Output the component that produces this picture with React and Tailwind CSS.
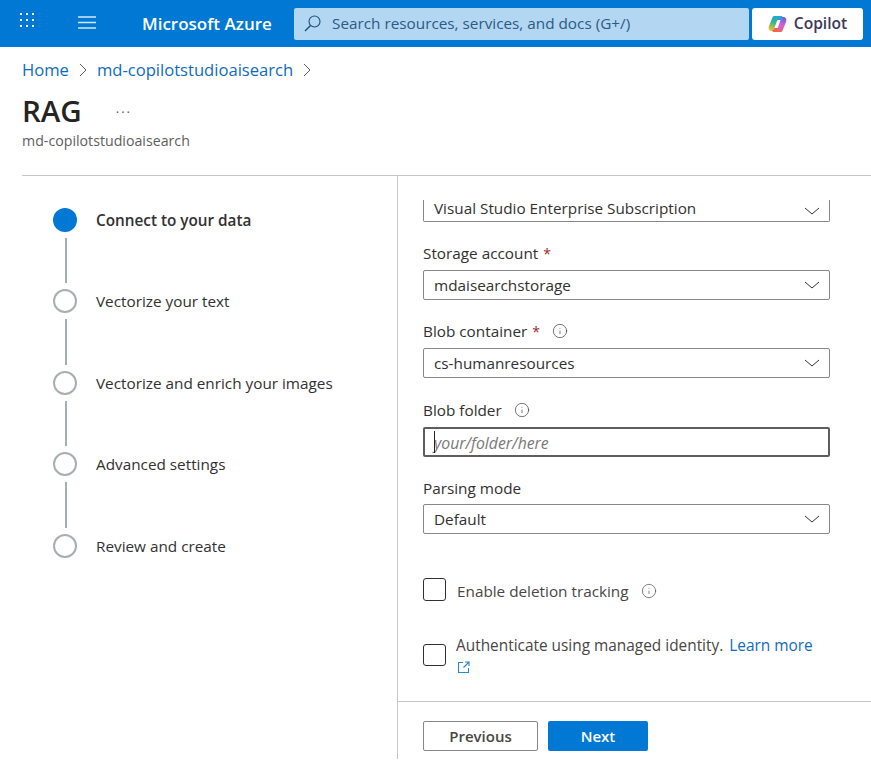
import React from "react";
import { Info } from "lucide-react";

const steps = [
  "Connect to your data",
  "Vectorize your text",
  "Vectorize and enrich your images",
  "Advanced settings",
  "Review and create",
];

function Waffle() {
  const dots = [];
  for (let y = 0; y < 3; y++) {
    for (let x = 0; x < 3; x++) {
      dots.push(<rect key={`${x}-${y}`} x={x * 6} y={y * 6} width="2" height="2" fill="#fff" />);
    }
  }
  return (
    <svg width="14" height="14" viewBox="0 0 14 14" className="shrink-0 mb-[7px]">
      {dots}
    </svg>
  );
}

function Hamburger() {
  return (
    <svg width="18" height="13" viewBox="0 0 18 13" className="shrink-0 ml-[44px] mb-[2px]" stroke="#d5e8f8" strokeWidth="1.4">
      <path d="M0 1H18M0 6.5H18M0 12H18" />
    </svg>
  );
}

function SearchGlyph() {
  return (
    <svg width="17" height="17" viewBox="0 0 17 17" fill="none" stroke="#1e4f7a" strokeWidth="1.1" className="shrink-0">
      <circle cx="10.5" cy="6.5" r="5.5" />
      <path d="M6.5 10.5L1 16" strokeWidth="1.4" />
    </svg>
  );
}

function Chevron() {
  return (
    <svg width="16" height="8" viewBox="0 0 16 8" fill="none" stroke="#323130" strokeWidth="1" className="shrink-0">
      <path d="M1 1L8 7L15 1" />
    </svg>
  );
}

function CrumbChevron() {
  return (
    <svg width="8" height="14" viewBox="0 0 8 14" fill="none" stroke="#605e5c" strokeWidth="1" className="shrink-0 mx-[10px]">
      <path d="M1 1L7 7L1 13" />
    </svg>
  );
}

function CopilotLogo() {
  return (
    <svg width="19" height="18" viewBox="0 0 19 18" className="shrink-0">
      <defs>
        <linearGradient id="cpLeft" x1="0.6" y1="0" x2="0.3" y2="1">
          <stop offset="0" stopColor="#1fa8e6" />
          <stop offset="0.45" stopColor="#35b58a" />
          <stop offset="1" stopColor="#f2c230" />
        </linearGradient>
        <linearGradient id="cpRight" x1="0.7" y1="0" x2="0.3" y2="1">
          <stop offset="0" stopColor="#6f63e0" />
          <stop offset="0.5" stopColor="#d262d8" />
          <stop offset="1" stopColor="#f4663a" />
        </linearGradient>
      </defs>
      <path d="M6 1 H12.5 C14 1 14.8 1.6 15.2 3 C14 2.4 13.2 3.2 12.7 5 H10.5 C9.5 5 9 5.6 8.7 6.6 L6.5 13 C6 15.5 5 16 3.5 16 C1 16 0 13.5 1 11 L3.8 4 C4.5 2 5 1 6 1 Z" fill="url(#cpLeft)" />
      <path d="M13 17 H6.5 C5 17 4.2 16.4 3.8 15 C5 15.6 5.8 14.8 6.3 13 H8.5 C9.5 13 10 12.4 10.3 11.4 L12.5 5 C13 2.5 14 2 15.5 2 C18 2 19 4.5 18 7 L15.2 14 C14.5 16 14 17 13 17 Z" fill="url(#cpRight)" />
    </svg>
  );
}

function Label({ text, required, info }) {
  return (
    <div className="flex items-center h-5 pb-[2px] text-[15.3px] text-[#323130]">
      <span>{text}</span>
      {required && <span className="ml-[5px] text-[14px] text-[#a4262c]">*</span>}
      {info && <Info size={16} strokeWidth={1} className="ml-[12px] text-[#323130]" />}
    </div>
  );
}

function SelectBox({ value }) {
  return (
    <div className="flex items-center justify-between h-[30px] w-[407px] border border-[#8a8886] rounded-[2px] pl-[10px] pr-[9px] text-[15.3px] text-[#323130]">
      <span>{value}</span>
      <Chevron />
    </div>
  );
}

export default function App() {
  return (
    <div className="w-[871px] h-[774px] overflow-hidden bg-white font-['Open_Sans',sans-serif] text-[#323130]">
      <header className="flex items-center h-[47px] bg-[#0078d4] pl-5">
        <Waffle />
        <Hamburger />
        <div className="ml-[46px] w-[152px] text-[17px] font-semibold text-white whitespace-nowrap">Microsoft Azure</div>
        <div className="flex items-center h-8 w-[455px] bg-[#b3d6f2] rounded-[2px] pl-[10px] text-[15.3px] text-[#2b5a85]">
          <SearchGlyph />
          <span className="ml-[11px] whitespace-nowrap">Search resources, services, and docs (G+/)</span>
        </div>
        <div className="flex items-center justify-center gap-[7px] ml-[3px] h-8 w-[111px] bg-white rounded-[3px] text-[15.6px] font-semibold text-[#3b3a5c]">
          <CopilotLogo />
          <span>Copilot</span>
        </div>
      </header>

      <div className="px-[22px]">
        <nav className="flex items-center h-[18px] mt-[14px] text-[16.6px] text-[#0f6cbd]">
          <span>Home</span>
          <CrumbChevron />
          <span>md-copilotstudioaisearch</span>
          <CrumbChevron />
        </nav>
        <div className="flex items-center h-[38px] mt-[13px]">
          <h1 className="text-[29.5px] font-semibold text-[#252423]">RAG</h1>
          <span className="ml-[34px] mb-[4px] text-[13px] tracking-[2px] text-[#605e5c]">...</span>
        </div>
        <p className="text-[14.2px] text-[#605e5c]">md-copilotstudioaisearch</p>
      </div>

      <main className="flex ml-[22px] mt-[24px] h-[584px] border-t border-[#c8c6c4]">
        <aside className="w-[376px] shrink-0 border-r border-[#c8c6c4] pl-[31px] pt-[32px]">
          {steps.map((s, i) => (
            <div key={s}>
              <div className="flex items-center h-6">
                {i === 0 ? (
                  <div className="w-6 h-6 rounded-full bg-[#0078d4]" />
                ) : (
                  <div className="w-6 h-6 rounded-full border-2 border-[#a8aeb2]" />
                )}
                <span className={`ml-[19px] text-[15.3px] ${i === 0 ? "font-semibold" : ""} text-[#323130]`}>{s}</span>
              </div>
              {i < steps.length - 1 && (
                <div className={`ml-[12px] w-[2px] my-[6px] bg-[#a8aeb2] ${i % 2 === 0 ? "h-[45px]" : "h-[46px]"}`} />
              )}
            </div>
          ))}
        </aside>

        <section className="flex-1 flex flex-col min-w-0">
          <div className="h-[525px] pl-[25px] overflow-hidden">
            <div className="flex items-center justify-between h-[22px] mt-[24px] w-[407px] border border-t-0 border-[#8a8886] rounded-b-[2px] pl-[10px] pr-[9px] text-[15.3px]">
              <span className="-mt-[5px]">Visual Studio Enterprise Subscription</span>
              <Chevron />
            </div>
            <div className="mt-[22px]">
              <Label text="Storage account" required />
              <div className="mt-[6px]"><SelectBox value="mdaisearchstorage" /></div>
            </div>
            <div className="mt-[22px]">
              <Label text="Blob container" required info />
              <div className="mt-[6px]"><SelectBox value="cs-humanresources" /></div>
            </div>
            <div className="mt-[23px]">
              <Label text="Blob folder" info />
              <div className="relative flex items-center mt-[6px] h-[30px] w-[407px] border-2 border-[#605e5c] rounded-[2px] pl-[9px] pt-[4px] text-[15.8px] italic text-[#7a7877]">
                <span className="absolute left-[9px] top-[2px] w-px h-[22px] bg-[#252423]" />
                your/folder/here
              </div>
            </div>
            <div className="mt-[22px]">
              <Label text="Parsing mode" />
              <div className="mt-[5px]"><SelectBox value="Default" /></div>
            </div>
            <div className="flex items-center mt-[45px] h-[24px]">
              <div className="w-[23px] h-[23px] mb-[4px] border border-[#323130] rounded-[3px]" />
              <span className="ml-[11px] text-[15.3px] text-[#484644]">Enable deletion tracking</span>
              <Info size={16} strokeWidth={1} className="ml-[12px] text-[#484644]" />
            </div>
            <div className="flex items-start mt-[32px]">
              <div className="w-[23px] h-[22px] mt-[9px] border border-[#323130] rounded-[3px] shrink-0" />
              <div className="ml-[10px] text-[15.4px] leading-[22px] text-[#484644]">
                <div className="whitespace-nowrap">
                  Authenticate using managed identity. <span className="ml-[2px] text-[#0f6cbd]">Learn more</span>
                </div>
                <svg width="13" height="13" viewBox="0 0 13 13" fill="none" stroke="#2b88c8" strokeWidth="1.1" className="block mt-[4px] ml-px">
                  <path d="M6 1.5H1.5V11.5H11.5V7" />
                  <path d="M8 1H12V5M12 1L6.5 6.5" />
                </svg>
              </div>
            </div>
          </div>
          <div className="flex items-start gap-[10px] flex-1 border-t border-[#c8c6c4] pl-[25px] pt-[19px]">
            <button className="w-[115px] h-[30px] border border-[#8a8886] rounded-[2px] bg-white text-[15px] font-semibold text-[#484644]">Previous</button>
            <button className="w-[100px] h-[30px] rounded-[2px] bg-[#0078d4] text-[15px] font-semibold text-white">Next</button>
          </div>
        </section>
      </main>
    </div>
  );
}
